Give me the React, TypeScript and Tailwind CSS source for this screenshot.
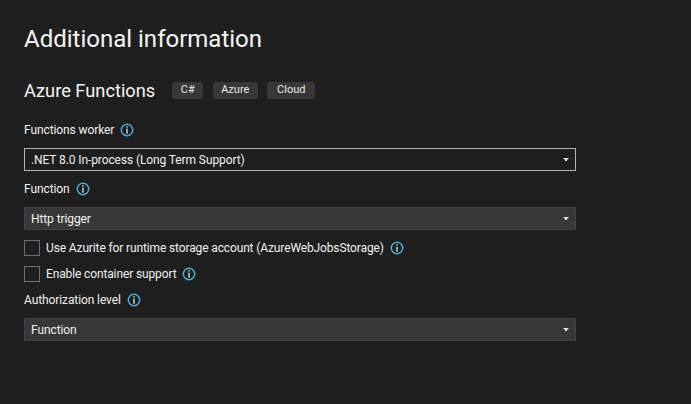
import React from "react";

const font = { fontFamily: 'Roboto, "Open Sans", sans-serif' };

function Info() {
  return (
    <svg width="14" height="14" viewBox="0 0 14 14" className="shrink-0" fill="none">
      <circle cx="7" cy="7" r="5.7" stroke="#48addf" strokeWidth="1.5" />
      <rect x="6.3" y="3.2" width="1.4" height="1.4" fill="#dcdcdc" />
      <rect x="6.3" y="5.7" width="1.4" height="5" fill="#dcdcdc" />
    </svg>
  );
}

function Label({ text }: { text: string }) {
  return (
    <div className="flex h-[18px] items-center gap-[6px] text-[12px] tracking-[-0.1px] text-[#f0f0f0]">
      <span>{text}</span>
      <Info />
    </div>
  );
}

function Select({ text, focused }: { text: string; focused?: boolean }) {
  return (
    <div
      className={
        "flex h-[23px] w-[552px] items-center justify-between border pl-[6px] pr-[6px] text-[12px] tracking-[-0.1px] text-[#f0f0f0] " +
        (focused ? "border-[#b4b4b4] bg-[#1f1f1f]" : "border-[#434343] bg-[#383838]")
      }
    >
      <span className="pt-px">{text}</span>
      <svg width="6" height="4" viewBox="0 0 6 4">
        <path d="M0 0H6L4 2V3H2V2Z" fill="#e0e0e0" />
      </svg>
    </div>
  );
}

function Check({ text }: { text: string }) {
  return (
    <div className="flex h-4 items-center text-[12px] tracking-[-0.13px] text-[#f0f0f0]">
      <div className="mr-[6px] h-4 w-4 border border-[#707070]" />
      <span className="mr-[6px]">{text}</span>
      <Info />
    </div>
  );
}

function Tag({ text, w }: { text: string; w: string }) {
  return (
    <span className={"flex h-[17px] items-center justify-center rounded-[3px] bg-[#383838] text-[11px] text-[#e8e8e8] " + w}>
      {text}
    </span>
  );
}

export default function App() {
  return (
    <div style={font} className="h-[404px] w-[691px] overflow-hidden bg-[#1f1f1f] pl-6 pt-[22px]">
      <h1 className="h-[34px] text-[24px] leading-[34px] text-[#f5f5f5]">Additional information</h1>
      <div className="mt-[22px] flex h-6 items-center">
        <span className="mr-[17px] pt-[2px] text-[18.25px] text-[#f5f5f5]">Azure Functions</span>
        <div className="flex gap-[9.5px]">
          <Tag text="C#" w="w-[31px]" />
          <Tag text="Azure" w="w-[45px]" />
          <Tag text="Cloud" w="w-[48px]" />
        </div>
      </div>
      <div className="mt-[19px]"><Label text="Functions worker" /></div>
      <div className="mt-[9px]"><Select text=".NET 8.0 In-process (Long Term Support)" focused /></div>
      <div className="mt-[9px]"><Label text="Function" /></div>
      <div className="mt-[9px]"><Select text="Http trigger" /></div>
      <div className="mt-[10px]"><Check text="Use Azurite for runtime storage account (AzureWebJobsStorage)" /></div>
      <div className="mt-[10px]"><Check text="Enable container support" /></div>
      <div className="mt-[9px]"><Label text="Authorization level" /></div>
      <div className="mt-[9px]"><Select text="Function" /></div>
    </div>
  );
}
